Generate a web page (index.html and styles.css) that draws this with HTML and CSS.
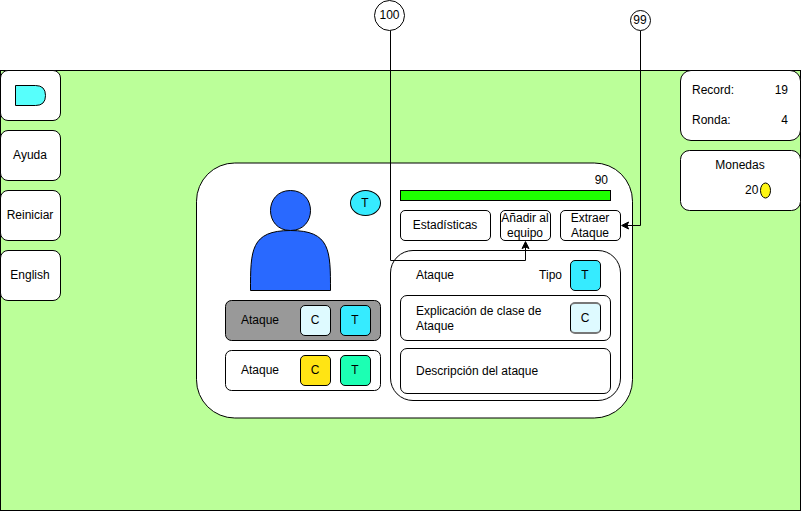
FILE: index.html
```html
<!DOCTYPE html>
<html lang="es">
<head>
<meta charset="utf-8">
<title>Equipo</title>
<link rel="stylesheet" href="styles.css">
</head>
<body>
<main class="stage">
  <nav class="menu">
    <button class="box menu-item" aria-label="Salir">
      <svg width="31" height="21"><path d="M.5.5H20.5Q30.500.5 30.500 10.500Q30.500 20.500 20.500 20.500H.5Z" fill="#57FFFC" stroke="#000"/></svg>
    </button>
    <button class="box menu-item">Ayuda</button>
    <button class="box menu-item">Reiniciar</button>
    <button class="box menu-item">English</button>
  </nav>

  <section class="card">
    <svg class="card-frame" width="437" height="257"><rect x=".5" y="1" width="436" height="255" rx="38.25" fill="#fff" stroke="#000"/></svg>
    <div class="team">
      <div class="character">
        <svg class="person" width="81" height="101" fill="#2969FF" stroke="#000">
          <path d="M.5 100.500C.5 60.500 .5 40.500 40.500 40.500C80.500 40.500 80.500 60.500 80.500 100.500Z"/>
          <path d="M40.500 40.500C13.830 40.500 13.830 .5 40.500 .5C67.170 .5 67.170 40.500 40.500 40.500Z"/>
        </svg>
        <div class="type-badge">T</div>
      </div>
      <div class="box attack selected"><span>Ataque</span><b class="box tile pale">C</b><b class="box tile cyan">T</b></div>
      <div class="box attack"><span>Ataque</span><b class="box tile yellow">C</b><b class="box tile mint">T</b></div>
    </div>
    <div class="info">
      <div class="health-value">90</div>
      <div class="health-bar"></div>
      <div class="actions">
        <button class="box action stats">Estadísticas</button>
        <button class="box action add">Añadir al<br>equipo</button>
        <button class="box action extract">Extraer<br>Ataque</button>
      </div>
      <div class="box details">
        <div class="details-head"><span>Ataque</span><span class="type-label">Tipo</span><b class="box tile cyan">T</b></div>
        <div class="box detail-row"><span>Explicación de clase de<br>Ataque</span><b class="box tile pale class-tile">C</b></div>
        <div class="box detail-row description">Descripción del ataque</div>
      </div>
    </div>
  </section>

  <aside class="status">
    <div class="box score">
      <div class="score-row"><span>Record:</span><span>19</span></div>
      <div class="score-row"><span>Ronda:</span><span>4</span></div>
    </div>
    <div class="box coins">
      <div>Monedas</div>
      <div class="coin-row"><span>20</span><svg class="coin" width="11" height="17"><ellipse cx="5.500" cy="8.500" rx="5" ry="7.500" fill="#FFF714" stroke="#000"/></svg></div>
    </div>
  </aside>
</main>

<svg class="callouts" width="801" height="511" fill="none" stroke="#000">
  <path d="M390.500 30.500V260.500H525.500V246"/>
  <path d="M525.500 241.600L529 248.600L525.500 246.900L522 248.600Z" fill="#000"/>
  <path d="M640.500 30.500V225.500H627"/>
  <path d="M621.600 225.500L628.600 222L626.900 225.500L628.600 229Z" fill="#000"/>
  <circle cx="389.500" cy="15.500" r="15" fill="#fff"/>
  <circle cx="640.500" cy="20.500" r="10" fill="#fff"/>
  <g class="callout-text"><text x="389.500" y="19">100</text><text x="640" y="24">99</text></g>
</svg>
</body>
</html>
```

FILE: styles.css
```css
* { box-sizing: border-box; }

body {
  margin: 0;
  padding-top: 70px;
  height: 511px;
  position: relative;
  overflow: hidden;
  background: #fff;
  color: #000;
  font: 12px/15px "Liberation Sans", Arial, sans-serif;
}

button { font: inherit; color: inherit; padding: 0; }

svg { display: block; flex: none; }

.stage {
  display: flex;
  justify-content: space-between;
  width: 801px;
  height: 441px;
  background: #BBFF99;
  box-shadow: inset 0 0 0 1px #000;
}

.box {
  border: 1px solid #000;
  background: #fff;
}

.menu {
  display: flex;
  flex-direction: column;
  gap: 9px;
  width: 61px;
}

.menu-item {
  display: flex;
  align-items: center;
  justify-content: center;
  height: 51px;
  border-radius: 8px;
  padding-right: 1px;
}

.menu-item:first-child { padding-right: 0; }

.card {
  position: relative;
  display: grid;
  grid-template-columns: 156px 231px;
  column-gap: 9px;
  align-content: start;
  width: 437px;
  height: 257px;
  margin: 92px 47px 0 135px;
  padding-left: 29px;
}

.card-frame { position: absolute; inset: 0; }

.team, .info { position: relative; }

.team {
  display: flex;
  flex-direction: column;
  gap: 9px;
  padding-top: 28px;
}

.character {
  display: flex;
  justify-content: space-between;
  height: 101px;
  padding-left: 25px;
}

.type-badge {
  width: 31px;
  height: 26px;
  padding-right: 1px;
  border: 1px solid #000;
  border-radius: 50%;
  background: #36EBFF;
  line-height: 25px;
  text-align: center;
}

.attack {
  display: flex;
  align-items: center;
  gap: 9px;
  height: 41px;
  border-radius: 6.5px;
  padding: 0 9px 0 15px;
}

.attack span { flex: 1; padding-bottom: 1px; }

.selected { background: #999; }

.tile {
  width: 31px;
  height: 31px;
  border-radius: 5px;
  padding-right: 1px;
  font-weight: normal;
  line-height: 28px;
  text-align: center;
}

.pale { background: #DEFAFF; }
.cyan { background: #36EBFF; }
.yellow { background: #FFE414; }
.mint { background: #1CFFB3; }

.health-value {
  padding: 11px 13px 0 0;
  height: 28px;
  text-align: right;
}

.health-bar {
  width: 211px;
  height: 11px;
  margin-left: 10px;
  border: 1px solid #000;
  background: #1EFF00;
}

.actions {
  display: flex;
  gap: 9px;
  margin: 9px 0 9px 10px;
}

.action {
  display: flex;
  align-items: center;
  justify-content: center;
  height: 31px;
  border-radius: 5px;
  padding-right: 1px;
  text-align: center;
  white-space: nowrap;
}

.stats { width: 91px; padding-bottom: 1px; }
.add { width: 51px; }
.extract { width: 61px; }

.details {
  height: 151px;
  border-radius: 23px;
  padding: 9px 9px 0;
}

.details-head {
  display: flex;
  align-items: center;
  padding: 0 10px 0 16px;
  margin-bottom: 4px;
}

.type-label { margin-left: auto; padding-right: 8px; }

.detail-row {
  display: flex;
  align-items: center;
  justify-content: space-between;
  height: 46px;
  border-radius: 7px;
  padding: 0 9px 0 15px;
}

.detail-row span { padding-top: 2px; }

.class-tile {
  height: 32px;
  border-block: 2px solid #777;
  line-height: 28px;
}

.description { margin-top: 7px; padding-top: 1px; }

.status {
  display: flex;
  flex-direction: column;
  gap: 9px;
  width: 121px;
}

.score {
  height: 71px;
  border-radius: 11px;
  padding: 12px 12px 0 11px;
}

.score-row {
  display: flex;
  justify-content: space-between;
  margin-bottom: 15px;
}

.coins {
  height: 61px;
  border-radius: 9.5px;
  padding: 7px 1px 0 0;
  text-align: center;
}

.coin-row {
  display: flex;
  align-items: center;
  gap: 2px;
  margin: 9px 0 0 64px;
}

.callouts { position: absolute; inset: 0; }

.callout-text {
  fill: #000;
  stroke: none;
  text-anchor: middle;
}
```
